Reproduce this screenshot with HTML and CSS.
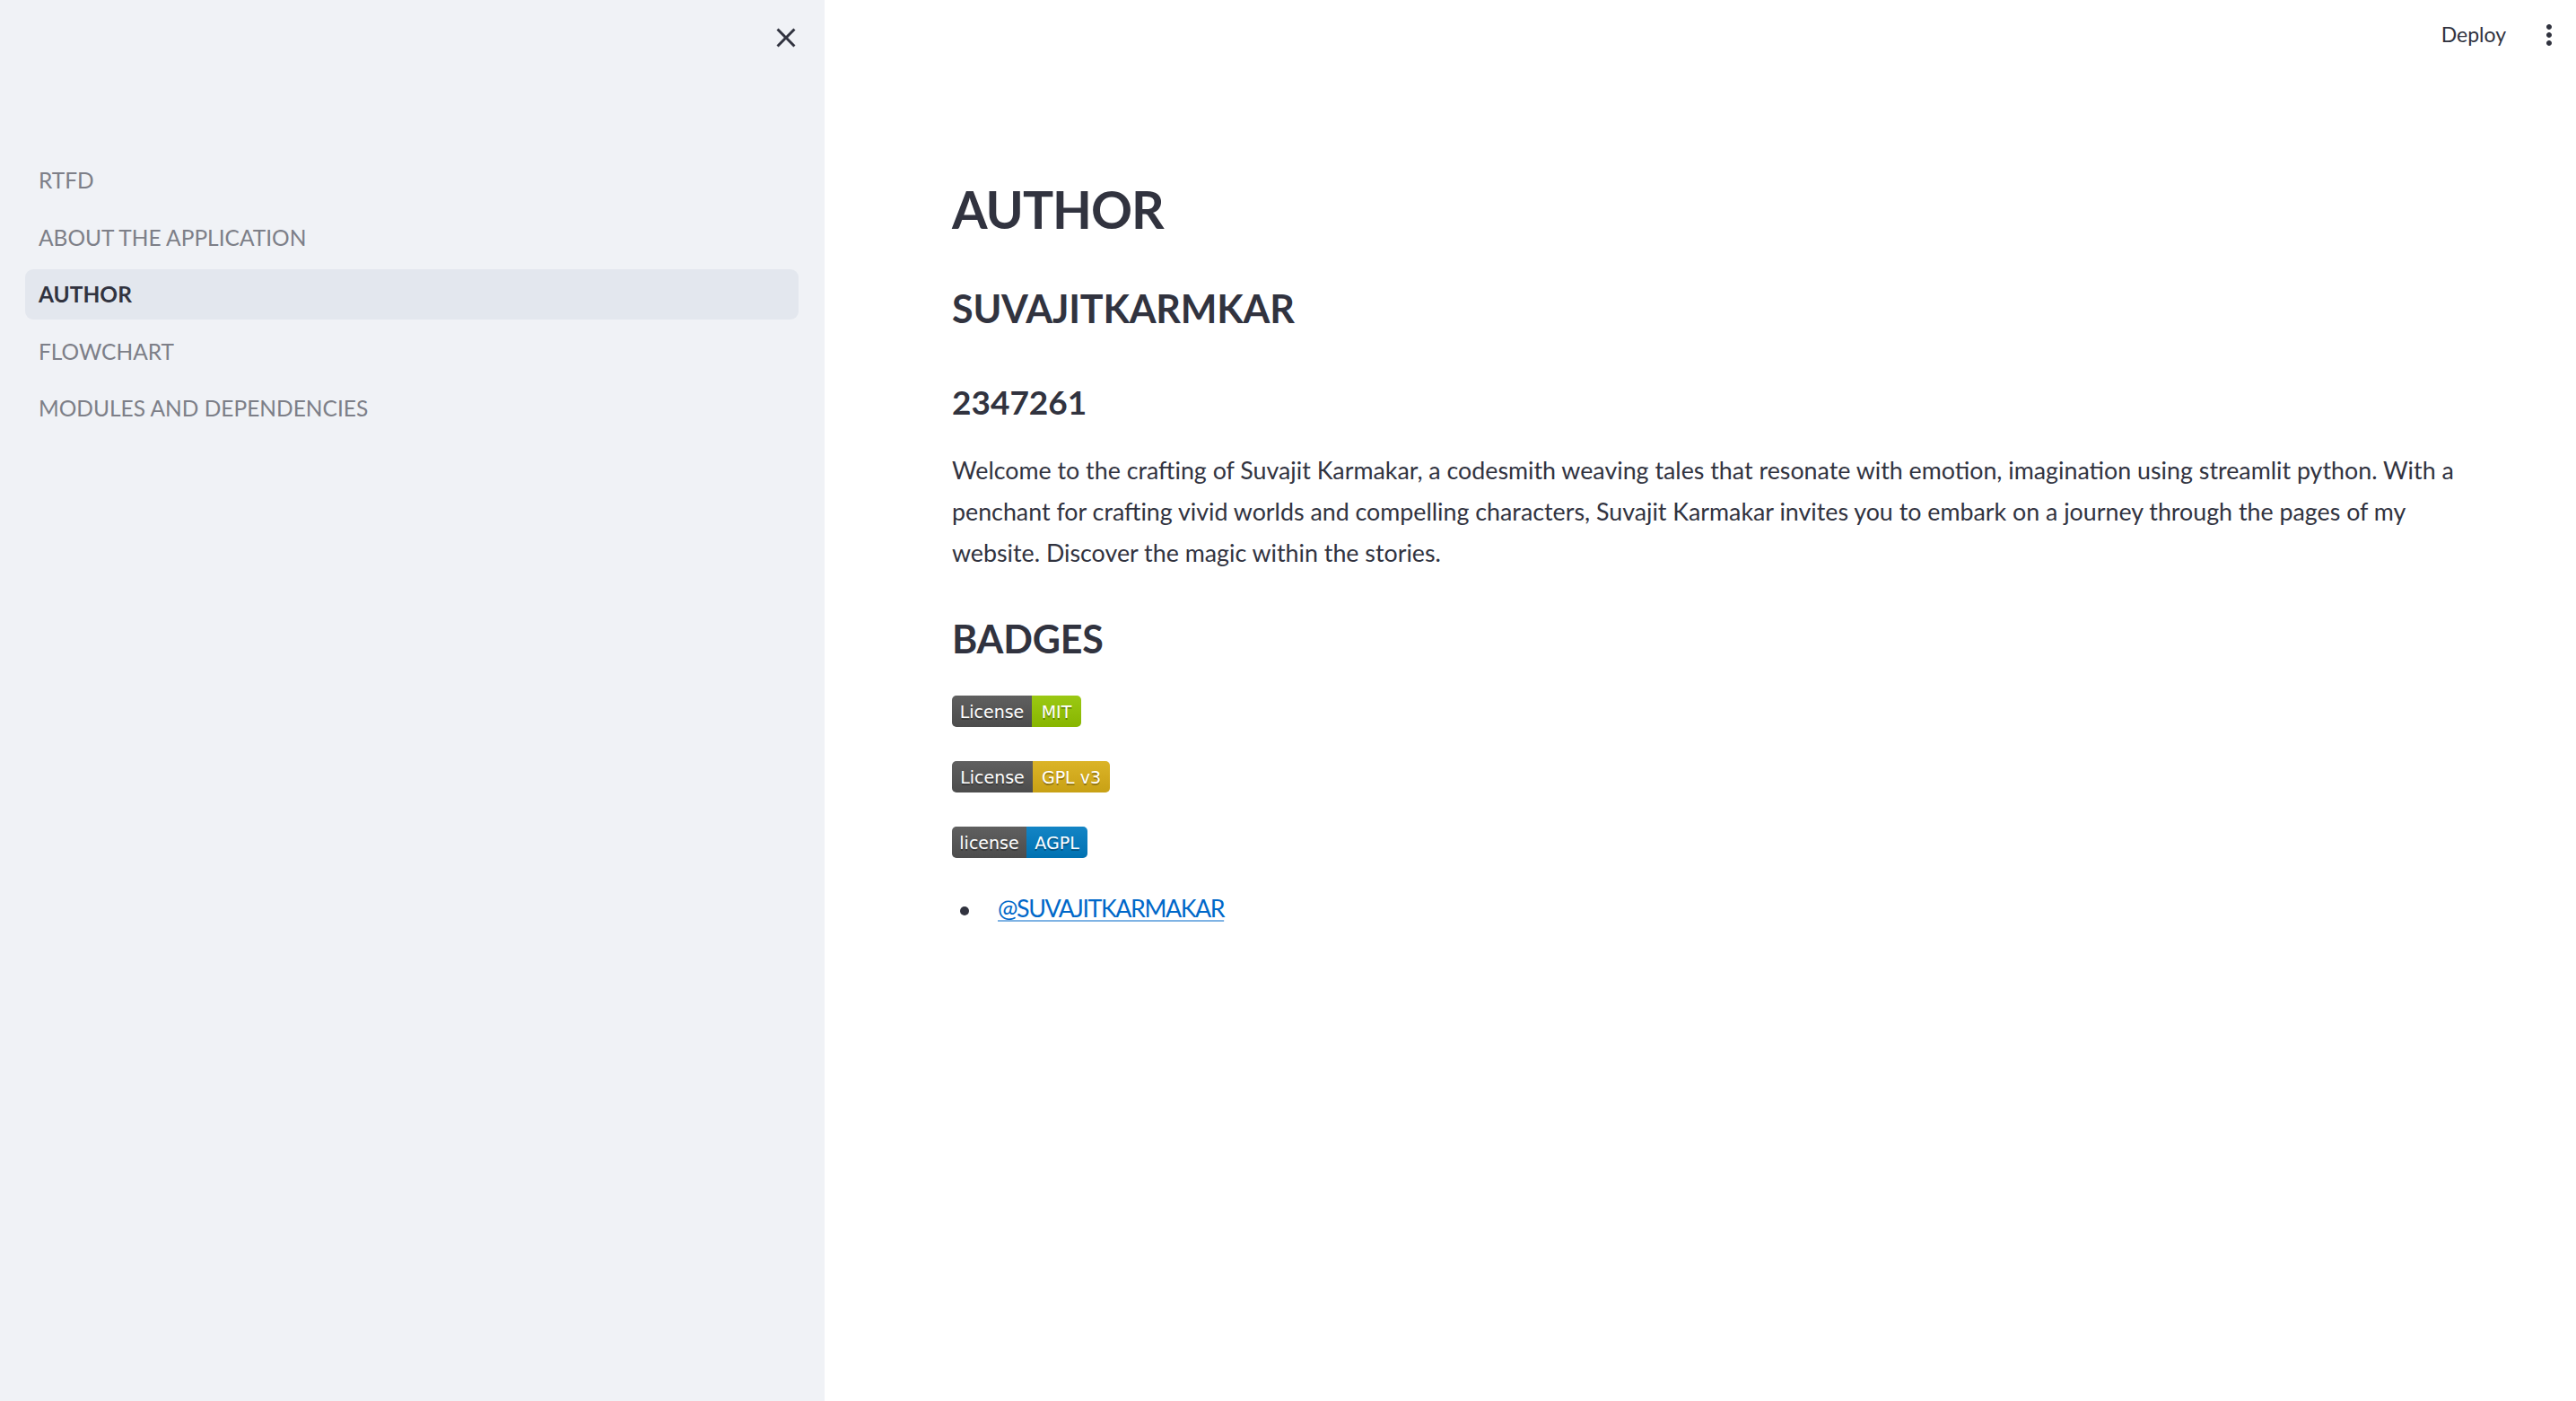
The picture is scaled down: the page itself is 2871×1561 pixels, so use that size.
FILE: index.html
```html
<!DOCTYPE html>
<html lang="en">
<head>
<meta charset="utf-8">
<title>AUTHOR</title>
<link rel="stylesheet" href="styles.css">
</head>
<body>
<aside class="sidebar">
  <div class="sidebar-head">
    <button class="icon-btn close-btn" aria-label="Close sidebar">
      <svg viewBox="0 0 24 24" width="36" height="36"><path fill="#31333f" d="M19 6.41L17.59 5 12 10.59 6.41 5 5 6.41 10.59 12 5 17.590 6.41 19 12 13.41 17.59 19 19 17.59 13.41 12z"/></svg>
    </button>
  </div>
  <nav class="nav">
    <a class="nav-item">RTFD</a>
    <a class="nav-item">ABOUT THE APPLICATION</a>
    <a class="nav-item active">AUTHOR</a>
    <a class="nav-item">FLOWCHART</a>
    <a class="nav-item">MODULES AND DEPENDENCIES</a>
  </nav>
</aside>
<main class="main">
  <header class="toolbar">
    <span class="deploy">Deploy</span>
    <button class="icon-btn menu-btn" aria-label="Main menu">
      <svg viewBox="0 0 24 24" width="36" height="36"><path fill="#31333f" d="M12 8c1.1 0 2-.9 2-2s-.9-2-2-2-2 .9-2 2 .9 2 2 2zm0 2c-1.1 0-2 .9-2 2s.9 2 2 2 2-.9 2-2-.9-2-2-2zm0 6c-1.1 0-2 .9-2 2s.9 2 2 2 2-.9 2-2-.9-2-2-2z"/></svg>
    </button>
  </header>
  <section class="content">
    <h1 class="h1">AUTHOR</h1>
    <h2 class="h2 h2-name">SUVAJITKARMKAR</h2>
    <h3 class="h3">2347261</h3>
    <p class="para">Welcome to the crafting of Suvajit Karmakar, a codesmith weaving tales that resonate with emotion, imagination using streamlit python. With a penchant for crafting vivid worlds and compelling characters, Suvajit Karmakar invites you to embark on a journey through the pages of my website. Discover the magic within the stories.</p>
    <h2 class="h2 h2-badges">BADGES</h2>
    <div class="badge badge-first"><span class="b-left w89">License</span><span class="b-right mit w55">MIT</span></div>
    <div class="badge"><span class="b-left w90">License</span><span class="b-right gpl w86">GPL v3</span></div>
    <div class="badge"><span class="b-left w83">license</span><span class="b-right agpl w68">AGPL</span></div>
    <ul class="links">
      <li class="link-item"><a class="link" href="#">@SUVAJITKARMAKAR</a></li>
    </ul>
  </section>
</main>
</body>
</html>
```
FILE: styles.css
```css
html, body {
  margin: 0;
  padding: 0;
  height: 100%;
}
body {
  display: flex;
  font-family: Lato, "Liberation Sans", sans-serif;
  color: #31333f;
  background: #ffffff;
  overflow: hidden;
}
.icon-btn {
  border: none;
  background: transparent;
  padding: 0;
  margin: 0;
  display: flex;
  align-items: center;
  justify-content: center;
  cursor: pointer;
}

/* ---------- sidebar ---------- */
.sidebar {
  width: 919px;
  flex: 0 0 919px;
  height: 100%;
  background: #f0f2f6;
  display: flex;
  flex-direction: column;
}
.sidebar-head {
  height: 84px;
  display: flex;
  justify-content: flex-end;
  align-items: center;
  padding-right: 25px;
}
.close-btn {
  width: 36px;
  height: 36px;
}
.nav {
  margin-top: 89px;
  padding: 0 29px 0 28px;
  display: flex;
  flex-direction: column;
  gap: 7.5px;
}
.nav-item {
  height: 56px;
  display: flex;
  align-items: center;
  padding-left: 15px;
  border-radius: 9px;
  font-size: 24.5px;
  line-height: 1.2;
  color: #7d7f88;
  white-space: nowrap;
}
.nav-item.active {
  background: #e3e7ee;
  color: #31333f;
  font-weight: 700;
}

/* ---------- main ---------- */
.main {
  flex: 1 1 auto;
  display: flex;
  flex-direction: column;
  min-width: 0;
}
.toolbar {
  height: 78px;
  display: flex;
  justify-content: flex-end;
  align-items: center;
  padding-right: 12px;
  gap: 30px;
}
.deploy {
  font-size: 23px;
  line-height: 1.2;
  color: #31333f;
}
.menu-btn {
  width: 36px;
  height: 36px;
}
.content {
  padding: 121px 120px 0 142px;
  display: flex;
  flex-direction: column;
  align-items: flex-start;
}
.h1, .h2, .h3 {
  margin: 0;
  font-weight: 700;
  line-height: 1.2;
  color: #31333f;
}
.h1 {
  font-size: 57px;
  letter-spacing: -1px;
}
.h2 {
  font-size: 43px;
  letter-spacing: -0.2px;
}
.h2-name { margin-top: 51px; }
.h3 {
  font-size: 37px;
  margin-top: 56px;
}
.para {
  margin: 32px 0 0 0;
  font-size: 26.8px;
  line-height: 45.7px;
  color: #31333f;
  width: 100%;
}
.h2-badges { margin-top: 47px; }

/* ---------- badges ---------- */
.badge {
  display: flex;
  height: 35px;
  margin-top: 38px;
  border-radius: 5px;
  overflow: hidden;
  font-family: "DejaVu Sans", Verdana, sans-serif;
  font-size: 19px;
  color: #ffffff;
  text-shadow: 0 2px 0 rgba(1, 1, 1, 0.3);
}
.badge-first { margin-top: 37px; }
.b-left, .b-right {
  display: flex;
  align-items: center;
  justify-content: center;
  height: 100%;
  background-image: linear-gradient(rgba(187, 187, 187, 0.1), rgba(0, 0, 0, 0.1));
}
.b-left { background-color: #555555; }
.mit { background-color: #97ca00; }
.gpl { background-color: #dfb317; }
.agpl { background-color: #007ec6; }
.w89 { width: 89px; }
.w90 { width: 90px; }
.w83 { width: 83px; }
.w55 { width: 55px; }
.w86 { width: 86px; }
.w68 { width: 68px; }

/* ---------- links ---------- */
.links {
  list-style: none;
  margin: 34px 0 0 0;
  padding: 0;
}
.link-item {
  display: flex;
  align-items: center;
  font-size: 26.8px;
  line-height: 45.7px;
}
.link-item::before {
  content: "";
  width: 10px;
  height: 10px;
  border-radius: 50%;
  background: #31333f;
  margin: 5px 32px 0 9px;
  flex: 0 0 10px;
}
.link {
  color: #0068c9;
  text-decoration: underline;
  text-decoration-color: rgba(0, 104, 201, 0.5);
  text-underline-offset: 3px;
  letter-spacing: -1.4px;
}
```
